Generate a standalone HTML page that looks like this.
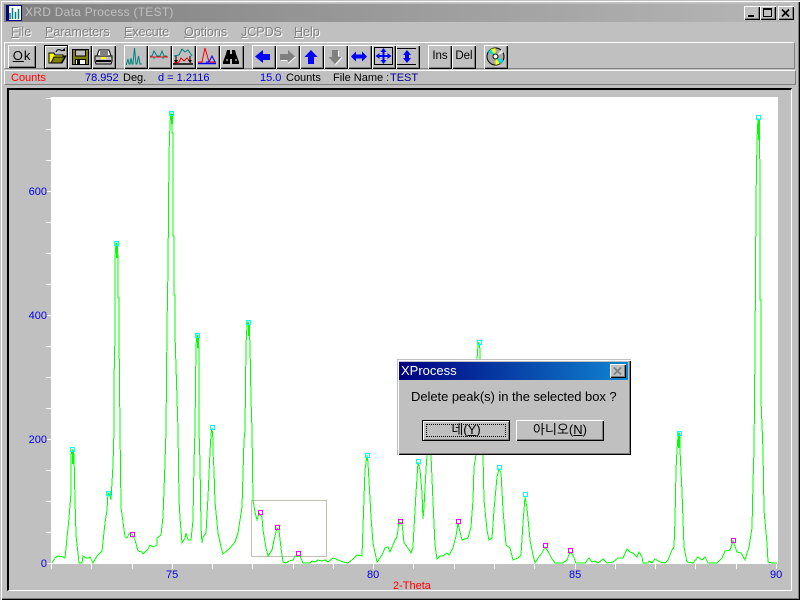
<!DOCTYPE html>
<html><head><meta charset="utf-8"><style>
html,body{margin:0;padding:0;background:#c0c0c0}
#w{position:relative;width:800px;height:600px;overflow:hidden;background:#c0c0c0;font-family:"Liberation Sans","Noto Sans CJK KR",sans-serif;font-size:12px;color:#000}
#w div,#w span.t{position:absolute;white-space:nowrap}
.m{top:24px;font-size:12.500px;line-height:16px;color:#808080;text-shadow:1px 1px 0 #fff}
.b{top:45px;width:24px;height:24px;background:#c0c0c0;box-shadow:inset 1px 1px 0 #fff,inset -1px -1px 0 #000,inset -2px -2px 0 #808080}
.b svg{position:absolute;left:0;top:0}
.p{box-shadow:inset 1px 1px 0 #000,inset -1px -1px 0 #000,inset 2px 2px 0 #fff,inset -2px -2px 0 #808080}
.s{top:71px;line-height:14px;font-size:11px}
.l{color:#0000e0;font-size:11px;line-height:14px}
u{text-decoration:underline}
</style></head><body><div id="w">
<div style="left:0;top:0;width:800px;height:600px;box-shadow:inset 1px 1px 0 #c0c0c0,inset 2px 2px 0 #fff,inset -1px -1px 0 #000,inset -2px -2px 0 #808080"></div>
<div style="left:4px;top:4px;width:786px;height:18px;background:linear-gradient(90deg,#808080,#b6b6b6)"></div>
<svg style="position:absolute;left:6px;top:5px" width="16" height="16"><rect x=".5" y=".5" width="15" height="15" fill="#fff" stroke="#000080"/><rect x="1" y="1" width="2" height="14" fill="#000080"/><path d="M4 14V8M6.500 14V3M9.500 14V7M12.500 14V4" stroke="#008080" stroke-width="1.500" fill="none"/></svg>
<div style="left:25px;top:4px;font-size:12px;line-height:17px;color:#c0c0c0;letter-spacing:.26px">XRD Data Process (TEST)</div>
<div style="left:744px;top:6px;width:16px;height:14px;background:#c0c0c0;box-shadow:inset 1px 1px 0 #fff,inset -1px -1px 0 #000,inset -2px -2px 0 #808080"><div style="left:4px;top:9px;width:6px;height:2px;background:#000"></div></div>
<div style="left:760px;top:6px;width:16px;height:14px;background:#c0c0c0;box-shadow:inset 1px 1px 0 #fff,inset -1px -1px 0 #000,inset -2px -2px 0 #808080"><div style="left:3px;top:2px;width:7px;height:6px;border:1px solid #000;border-top-width:2px"></div></div>
<div style="left:778px;top:6px;width:16px;height:14px;background:#c0c0c0;box-shadow:inset 1px 1px 0 #fff,inset -1px -1px 0 #000,inset -2px -2px 0 #808080"><svg width="16" height="14" style="position:absolute;left:0;top:0"><path d="M4 3.500L11 10.500M11 3.500L4 10.500" stroke="#000" stroke-width="1.700"/></svg></div>
<div class="m" style="left:11px"><u>F</u>ile</div>
<div class="m" style="left:45px"><u>P</u>arameters</div>
<div class="m" style="left:124px"><u>E</u>xecute</div>
<div class="m" style="left:184px"><u>O</u>ptions</div>
<div class="m" style="left:241px"><u>J</u>CPDS</div>
<div class="m" style="left:294px"><u>H</u>elp</div>
<div style="left:4px;top:42px;width:791px;height:27px;border-top:1px solid #fff;border-bottom:1px solid #808080;border-left:1px solid #fff;border-right:1px solid #808080;box-sizing:border-box"></div>
<div style="left:4px;top:70px;width:792px;height:15px;border-top:1px solid #fff;border-bottom:1px solid #808080;border-left:1px solid #fff;border-right:1px solid #808080;box-sizing:border-box"></div>

<div class="b" style="left:8px;width:28px;height:23px;line-height:22px;text-align:center;font-size:13px;letter-spacing:1px"><u>O</u>k</div>
<div class="b p" style="left:44px"><svg width="24" height="24"><g transform="translate(0,-1)"><path d="M5 9h5l1 2h8v1h3l-4 7H5z" fill="#ffff00" stroke="#000"/><path d="M7 19l3-6h11l-4 6z" fill="#808000" stroke="#000"/><path d="M12 8c1-3 4-3 6-1" fill="none" stroke="#000"/><path d="M17 7h4V4z" fill="#000"/></g></svg></div>
<div class="b" style="left:68px"><svg width="24" height="24"><rect x="4.500" y="4.500" width="16" height="15" fill="#808000" stroke="#000"/><rect x="7.500" y="5" width="10" height="6" fill="#c0c0c0" stroke="#000"/><rect x="7.500" y="14.500" width="10" height="5" fill="#fff" stroke="#000"/><rect x="9" y="15" width="3" height="4" fill="#000"/></svg></div>
<div class="b" style="left:92px"><svg width="24" height="24"><g transform="translate(-1,-1)"><path d="M8 6h10l2 6H6z" fill="#fff" stroke="#000"/><path d="M9 8h8M9 10h8" stroke="#000"/><path d="M4 12h17v5l-1 3H5l-1-3z" fill="#c0c0c0" stroke="#000"/><rect x="5" y="16" width="15" height="2" fill="#000"/><rect x="10" y="13" width="5" height="2" fill="#ffff00"/></g></svg></div>
<div class="b" style="left:124px"><svg width="24" height="24"><g transform="translate(-1,0)"><path d="M3.500 20v-1l1.500-5 1 5h1l1-6 1 6h1l1.500-16 1.500 16h1l1.500-8 1.500 8h2" fill="none" stroke="#008080"/></g></svg></div>
<div class="b" style="left:148px"><svg width="24" height="24"><g transform="translate(-1,-1)"><path d="M3 12h2l2-5 3 5h3l2-5 2 5h3" fill="none" stroke="#008080"/><path d="M3 13h18" stroke="#ff0000"/><path d="M7 15v-2M16 15v-2" stroke="#008080"/></g></svg></div>
<div class="b" style="left:172px"><svg width="24" height="24"><g transform="translate(-1,-1)"><path d="M3 12l5-1 3-6 3 3 3-2 4 6" fill="none" stroke="#008080"/><path d="M3 19l5-1 2-4 3 3 3-3 4 5" fill="none" stroke="#ff0000"/><path d="M2 20h20" stroke="#000" stroke-width="1.500"/><path d="M5 12v6M19 12v6" stroke="#000"/><path d="M3 16l2 3 2-3zM17 16l2 3 2-3z" fill="#000"/></g></svg></div>
<div class="b" style="left:196px"><svg width="24" height="24"><g transform="translate(-1,-1)"><path d="M3 18h4l3-14 4 14h7" fill="none" stroke="#ff0000"/><path d="M11 18h3l3-6 3 6" fill="none" stroke="#0000ff"/><path d="M3 19.500h18" stroke="#0000ff" stroke-width="1.500"/></g></svg></div>
<div class="b" style="left:220px"><svg width="24" height="24"><g transform="translate(-1,-1)"><path d="M8 6h3v4h2V6h3l1 4 3 8v2h-7v-5h-2v5H4v-2l3-8z" fill="#000"/><path d="M7 16h2M16 16h2" stroke="#fff"/></g></svg></div>
<div class="b" style="left:252px"><svg width="24" height="24"><path d="M3 11.500L11 5V9H18V15H11V18z" fill="#0000ff"/></svg></div>
<div class="b" style="left:276px"><svg width="24" height="24"><path d="M19 11.500L12 5V9H4V15H12V18z" fill="#808080"/><path d="M12 18.500L19.500 12M5 15.500H11" stroke="#fff" fill="none"/></svg></div>
<div class="b" style="left:300px"><svg width="24" height="24"><path d="M11 5L17.500 12H14V19H8V12H4.500z" fill="#0000ff"/></svg></div>
<div class="b" style="left:324px"><svg width="24" height="24"><path d="M11 19L17.500 12H14V5H8V12H4.500z" fill="#808080"/><path d="M11.500 19.500L18 12.500M14.500 6V11" stroke="#fff" fill="none"/></svg></div>
<div class="b" style="left:348px"><svg width="24" height="24"><path d="M3 11.500L8 6.500V9.500H14V6.500L19 11.500L14 16.500V13.500H8V16.500z" fill="#0000ff"/></svg></div>
<div class="b" style="left:372px"><svg width="24" height="24"><rect x="2.500" y="2.500" width="18" height="17" fill="none" stroke="#000"/><path d="M11.500 3L14.500 7H12.500V10H15.500V8L19.500 11L15.500 14V12H12.500V15H14.500L11.500 19L8.500 15H10.500V12H7.500V14L3.500 11L7.500 8V10H10.500V7H8.500z" fill="#0000ff"/></svg></div>
<div class="b" style="left:396px"><svg width="24" height="24"><path d="M1 3.500h19M1 19.500h19" stroke="#000"/><path d="M11 5L15 10H13V13H15L11 18L7 13H9V10H7z" fill="#0000ff"/></svg></div>
<div class="b" style="left:428px;line-height:23px;text-align:center;font-size:11.500px">Ins</div>
<div class="b" style="left:452px;line-height:23px;text-align:center;font-size:11.500px">Del</div>
<div class="b" style="left:484px"><svg width="24" height="24"><circle cx="11.500" cy="11.500" r="8.500" fill="#a8a8a8" stroke="#000"/><path d="M11.500 11.500L7 4 11.500 3zM11.500 11.500l4 7.500-4 1z" fill="#ffff00"/><path d="M11.500 11.500L4 7 7 4zM11.500 11.500l8 4-3 3.500z" fill="#00e0e0"/><path d="M11.500 11.500l6-7 2 3z" fill="#e8e8e8"/><circle cx="11.500" cy="11.500" r="2.500" fill="#fff" stroke="#000"/></svg></div>

<div class="s" style="left:11px;color:#f00">Counts</div>
<div class="s" style="left:85px;color:#0000c8">78.952</div>
<div class="s" style="left:123px">Deg.</div>
<div class="s" style="left:158px;color:#0000c8">d = 1.2116</div>
<div class="s" style="left:260px;color:#0000e0">15.0</div>
<div class="s" style="left:286px">Counts</div>
<div class="s" style="left:333px">File Name :</div>
<div class="s" style="left:390px;color:#000090">TEST</div>

<div style="left:7px;top:88px;width:785px;height:503px;box-sizing:border-box;border-top:2px solid #000;border-left:2px solid #000;border-right:1px solid #fff;border-bottom:1px solid #fff"></div>
<div style="left:51px;top:97px;width:727px;height:467px;background:#fff"></div>
<svg style="position:absolute;left:0;top:0" width="800" height="600">
<path shape-rendering="crispEdges" stroke="#fff" fill="none" d="M46 563.500h5M46 532.500h5M46 501.500h5M46 470.500h5M46 439.500h5M46 408.500h5M46 377.500h5M46 346.500h5M46 315.500h5M46 284.500h5M46 253.500h5M46 222.500h5M46 191.500h5M46 160.500h5M46 129.500h5M46 98.500h5M51.500 564v5M91.500 564v5M132.500 564v5M172.500 564v5M212.500 564v5M252.500 564v5M293.500 564v5M333.500 564v5M373.500 564v5M413.500 564v5M454.500 564v5M494.500 564v5M534.500 564v5M575.500 564v5M615.500 564v5M655.500 564v5M695.500 564v5M736.500 564v5M776.500 564v5"/>
<rect x="251.500" y="500.500" width="75" height="56" fill="none" stroke="#c0c0b0" shape-rendering="crispEdges"/>
<polyline fill="none" stroke="#00ff00" stroke-width="1" shape-rendering="crispEdges" points="52,563 55,558 58,556 63,557 65,558 67,538 69,518 71,493 71,455 72,450 73,450 74,455 75,500 76,535 78,553 79,563 82,563 83,556 86,558 89,558 90,557 93,563 97,556 102,551 105,523 107,510 108,493 110,495 111,500 113,465 114,430 114,380 115,335 115,257 116,243 117,243 118,258 118,298 119,298 119,335 120,430 121,507 123,522 125,537 127,538 129,534 132,534 135,540 138,551 142,552 143,554 148,549 150,545 153,547 157,545 157,538 161,535 163,517 165,463 166,430 167,327 168,267 169,155 170,123 171,112 172,123 172,133 173,133 173,236 174,236 174,295 175,295 175,335 178,430 179,500 180,518 182,543 185,538 186,533 188,540 191,540 193,520 194,463 195,430 196,345 197,335 198,335 199,350 199,430 200,463 201,527 202,543 203,537 206,533 208,497 210,452 211,435 212,428 213,440 213,452 214,470 215,502 218,533 221,547 223,554 230,548 235,542 238,533 242,507 244,440 245,430 246,345 247,325 248,322 249,325 250,345 251,400 252,430 253,500 255,512 257,520 259,513 262,517 263,530 266,548 268,556 272,550 274,540 277,528 279,530 281,548 283,562 286,563 289,561 293,560 295,556 300,556 303,563 310,563 312,561 315,562 318,560 322,561 325,560 328,562 333,558 338,560 343,562 348,563 353,559 357,555 362,556 363,527 365,470 367,455 368,463 371,517 373,543 377,562 382,555 385,548 388,547 390,552 395,540 397,537 399,522 402,523 404,543 408,548 411,553 413,547 414,528 416,493 418,462 420,470 422,493 423,519 424,507 426,470 427,455 428,440 431,440 431,455 433,502 435,545 437,559 440,556 443,556 447,553 449,555 453,548 456,536 458,523 460,532 462,540 468,538 471,527 473,500 474,467 476,455 477,400 477,360 478,345 479,342 480,350 481,400 483,455 484,500 487,530 489,540 492,538 494,510 497,477 499,469 501,473 503,510 506,545 510,548 513,560 518,558 521,555 523,523 525,497 527,508 530,540 533,555 535,563 538,558 542,553 545,547 549,553 552,559 555,563 563,563 567,560 570,552 573,555 576,563 585,563 589,558 592,562 595,561 598,563 603,559 607,563 613,562 618,558 623,558 627,549 630,552 633,553 637,557 639,552 642,557 643,563 648,563 649,561 652,563 655,559 660,562 665,563 668,560 672,550 674,547 675,520 676,470 677,450 678,436 679,433 680,436 680,450 682,492 684,547 687,562 693,563 698,557 702,560 705,557 708,563 717,563 722,558 725,551 730,550 733,541 737,552 741,553 745,560 749,547 752,528 753,483 754,450 755,350 756,200 757,140 758,118 759,125 760,170 760,300 761,300 761,400 763,450 764,510 767,543 768,562 772,563 777,563"/>
<path shape-rendering="crispEdges" fill="#00ff00" d="M116 245h2v13h-2zM171 114h2v10h-2zM197 338h2v10h-2zM678 436h2v12h-2zM758 120h2v20h-2zM248 324h2v12h-2zM72 452h2v12h-2z"/>
<g fill="none" stroke="#00ffff" shape-rendering="crispEdges">
<rect x="70.500" y="447.500" width="4" height="4"/><rect x="106.500" y="491.500" width="4" height="4"/><rect x="114.500" y="241.500" width="4" height="4"/><rect x="169.500" y="111.500" width="4" height="4"/><rect x="195.500" y="333.500" width="4" height="4"/><rect x="210.500" y="425.500" width="4" height="4"/><rect x="246.500" y="320.500" width="4" height="4"/><rect x="365.500" y="453.500" width="4" height="4"/><rect x="416.500" y="459.500" width="4" height="4"/><rect x="477.500" y="340.500" width="4" height="4"/><rect x="497.500" y="465.500" width="4" height="4"/><rect x="523.500" y="492.500" width="4" height="4"/><rect x="677.500" y="431.500" width="4" height="4"/><rect x="756.500" y="115.500" width="4" height="4"/>
</g>
<g fill="none" stroke="#ff00ff" shape-rendering="crispEdges">
<rect x="130.500" y="532.500" width="4" height="4"/><rect x="258.500" y="510.500" width="4" height="4"/><rect x="275.500" y="525.500" width="4" height="4"/><rect x="296.500" y="551.500" width="4" height="4"/><rect x="398.500" y="519.500" width="4" height="4"/><rect x="456.500" y="519.500" width="4" height="4"/><rect x="543.500" y="543.500" width="4" height="4"/><rect x="568.500" y="548.500" width="4" height="4"/><rect x="731.500" y="538.500" width="4" height="4"/>
</g>
</svg>
<div class="l" style="left:21px;width:26px;text-align:right;top:185px">600</div>
<div class="l" style="left:21px;width:26px;text-align:right;top:309px">400</div>
<div class="l" style="left:21px;width:26px;text-align:right;top:433px">200</div>
<div class="l" style="left:21px;width:26px;text-align:right;top:557px">0</div>
<div class="l" style="left:166px;top:568px">75</div>
<div class="l" style="left:367px;top:568px">80</div>
<div class="l" style="left:569px;top:568px">85</div>
<div class="l" style="left:770px;top:568px">90</div>
<div class="l" style="left:393px;top:579px;color:#f00">2-Theta</div>

<div style="left:397px;top:359px;width:234px;height:96px;background:#c0c0c0;box-shadow:inset 1px 1px 0 #c0c0c0,inset 2px 2px 0 #fff,inset -1px -1px 0 #000,inset -2px -2px 0 #808080"></div>
<div style="left:399px;top:362px;width:229px;height:18px;background:linear-gradient(90deg,#000080,#1084d0)"></div>
<div style="left:401px;top:362px;color:#fff;font-size:13px;line-height:18px">XProcess</div>
<div style="left:610px;top:364px;width:16px;height:14px;background:#c0c0c0;box-shadow:inset 1px 1px 0 #fff,inset -1px -1px 0 #000,inset -2px -2px 0 #808080"><svg width="16" height="14" style="position:absolute;left:0;top:0"><path d="M4 3.500L11 10.500M11 3.500L4 10.500" stroke="#808080" stroke-width="1.700"/></svg></div>
<div style="left:411px;top:389px;font-size:13px;line-height:16px;letter-spacing:-.05px">Delete peak(s) in the selected box ?</div>
<div style="left:422px;top:420px;width:88px;height:21px;background:#c0c0c0;box-shadow:inset 0 0 0 1px #000,inset 2px 2px 0 #fff,inset -2px -2px 0 #808080;text-align:center;line-height:20px;font-size:13px">네(<u>Y</u>)<div style="left:4px;top:4px;width:78px;height:11px;border:1px dotted #000"></div></div>
<div style="left:516px;top:420px;width:88px;height:21px;background:#c0c0c0;box-shadow:inset 1px 1px 0 #fff,inset -1px -1px 0 #000,inset -2px -2px 0 #808080;text-align:center;line-height:20px;font-size:13px">아니오(<u>N</u>)</div>
</div></body></html>
